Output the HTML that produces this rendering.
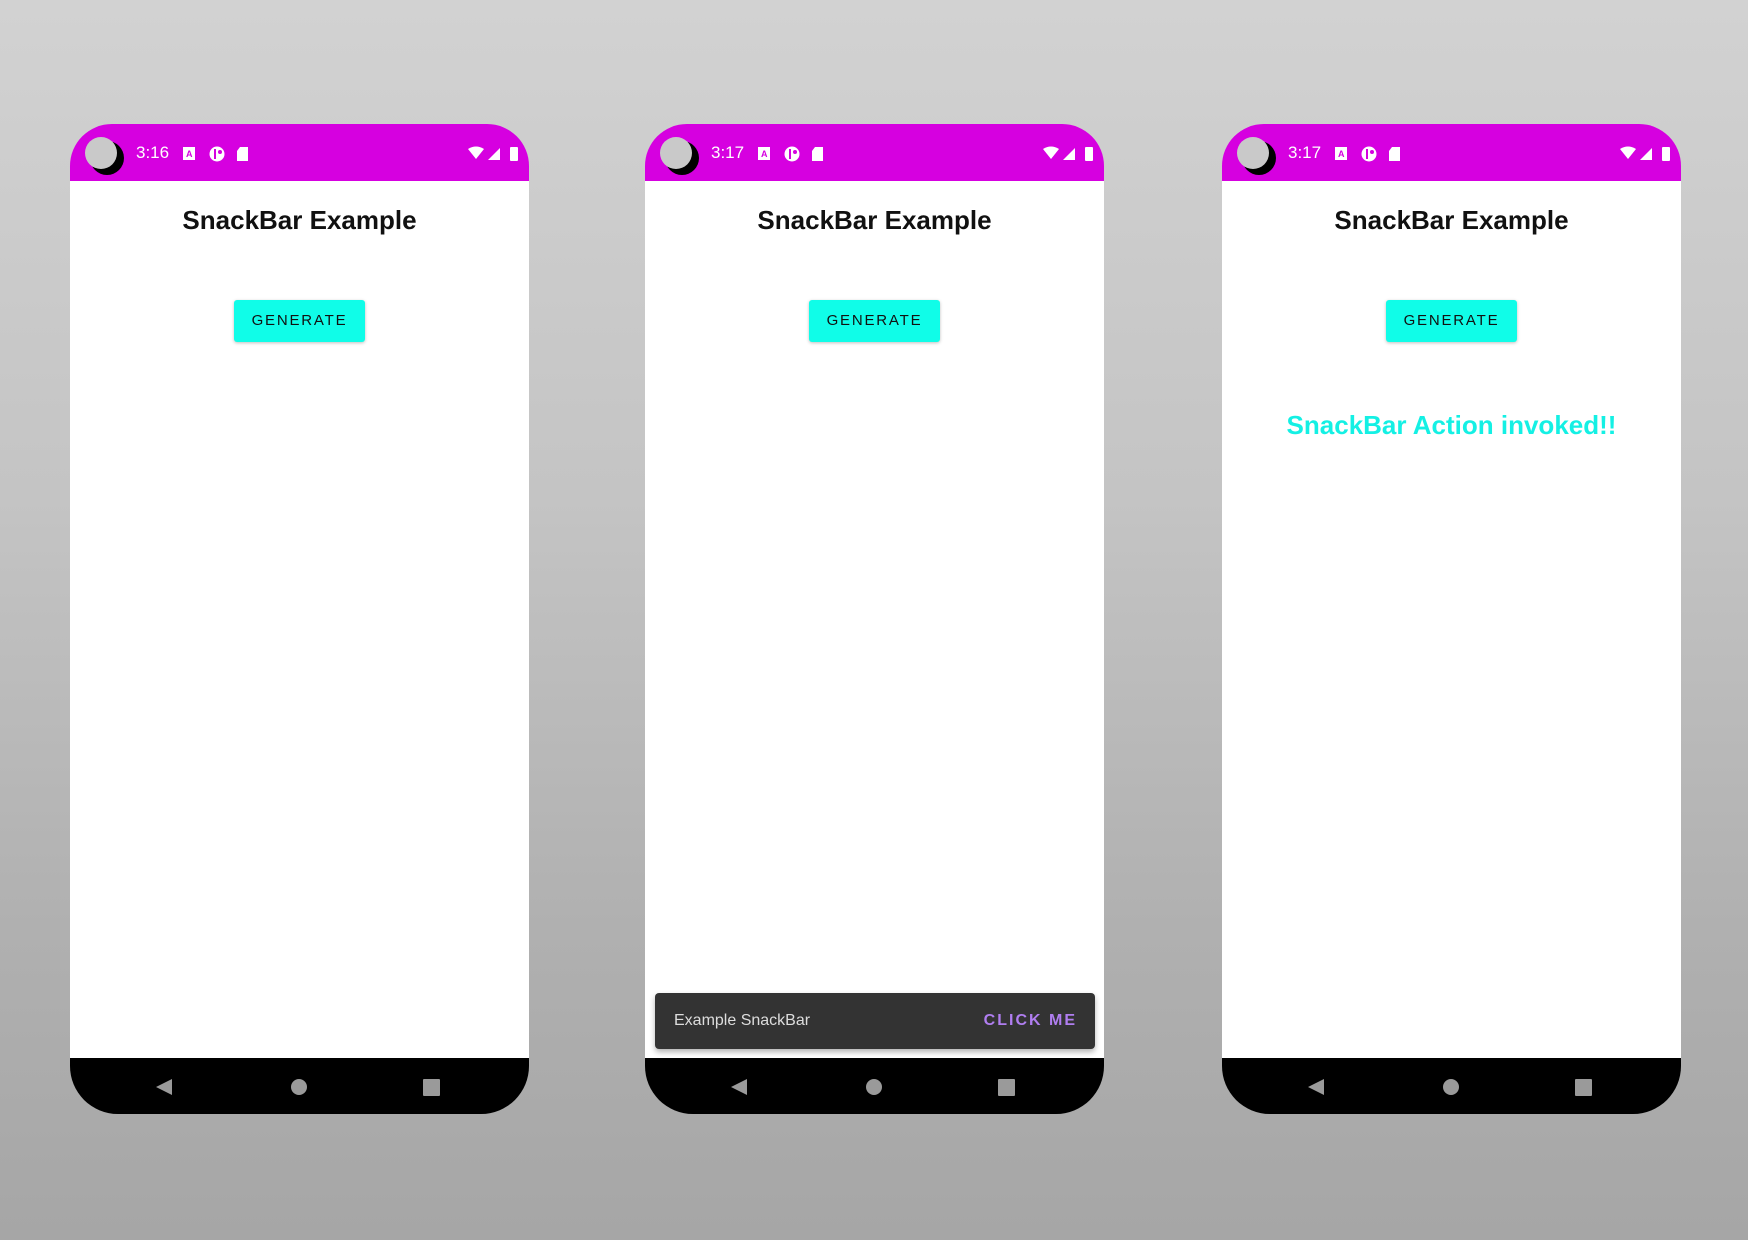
<!DOCTYPE html>
<html><head><style>
body{margin:0;width:1748px;height:1240px;overflow:hidden;background:linear-gradient(180deg,#d2d2d2 0%,#c4c4c4 40%,#b0b0b0 75%,#a6a6a6 100%);font-family:"Liberation Sans",sans-serif;position:relative}
.ph{position:absolute;top:124px;width:459px;height:990px;}
.sb{position:absolute;left:0;top:0;width:459px;height:57px;background:#d600e0;border-radius:42px 42px 0 0}
.scr{position:absolute;left:0;top:57px;width:459px;height:877px;background:#fff}
.nav{position:absolute;left:0;top:934px;width:459px;height:56px;background:#000;border-radius:0 0 48px 48px}
.cam1{position:absolute;left:20px;top:17px;width:34px;height:34px;border-radius:50%;background:#000}
.cam2{position:absolute;left:15px;top:13px;width:32px;height:32px;border-radius:50%;background:#c9c9c9}
.time{position:absolute;left:66px;top:19px;color:#fff;font-size:17px}
.ttl{position:absolute;left:0;width:459px;top:24px;text-align:center;font-size:26px;font-weight:bold;color:#111}
.btn{position:absolute;left:164px;top:119px;width:131px;height:42px;background:#10fde8;border-radius:3px;box-shadow:0 1px 3px rgba(0,0,0,.25);text-align:center;line-height:42px;font-size:15px;letter-spacing:1.8px;color:#111}
.ic{position:absolute;top:22px}
</style></head><body>
<div class="ph" style="left:70px">
<div class="sb"><div class="cam1"></div><div class="cam2"></div><div class="time">3:16</div>
<svg class="ic" style="left:113px" width="120" height="16"><rect x="0" y="1" width="12" height="13" fill="#fff"/><text x="3" y="11" font-size="9" fill="#d600e0" font-weight="bold">A</text><circle cx="34" cy="8" r="7.5" fill="#fff"/><rect x="31" y="3" width="2" height="10" fill="#d600e0"/><circle cx="37" cy="6" r="2" fill="#d600e0"/><path d="M57 1h8v14h-11v-10z" fill="#fff"/></svg>
<svg class="ic" style="left:398px" width="56" height="16"><path d="M0 3 Q8 -2 16 3 L8 13z" fill="#fff"/><path d="M20 14 L32 2 V14z" fill="#fff"/><rect x="42" y="1" width="8" height="14" rx="1" fill="#fff"/></svg></div>
<div class="scr"><div class="ttl">SnackBar Example</div><div class="btn">GENERATE</div></div>
<div class="nav"><svg width="459" height="56"><path d="M86 29 L102 21 V37z" fill="#9a9a9a"/><circle cx="229" cy="29" r="8" fill="#9a9a9a"/><rect x="353" y="21" width="17" height="17" rx="1" fill="#9a9a9a"/></svg></div>
</div>

<div class="ph" style="left:645px">
<div class="sb"><div class="cam1"></div><div class="cam2"></div><div class="time">3:17</div>
<svg class="ic" style="left:113px" width="120" height="16"><rect x="0" y="1" width="12" height="13" fill="#fff"/><text x="3" y="11" font-size="9" fill="#d600e0" font-weight="bold">A</text><circle cx="34" cy="8" r="7.5" fill="#fff"/><rect x="31" y="3" width="2" height="10" fill="#d600e0"/><circle cx="37" cy="6" r="2" fill="#d600e0"/><path d="M57 1h8v14h-11v-10z" fill="#fff"/></svg>
<svg class="ic" style="left:398px" width="56" height="16"><path d="M0 3 Q8 -2 16 3 L8 13z" fill="#fff"/><path d="M20 14 L32 2 V14z" fill="#fff"/><rect x="42" y="1" width="8" height="14" rx="1" fill="#fff"/></svg></div>
<div class="scr"><div class="ttl">SnackBar Example</div><div class="btn">GENERATE</div>
<div style="position:absolute;left:10px;top:812px;width:440px;height:56px;background:#333;border-radius:4px;box-shadow:0 3px 6px rgba(0,0,0,.3)"><span style="position:absolute;left:19px;top:19px;color:#ddd;font-size:16px">Example SnackBar</span><span style="position:absolute;right:18px;top:19px;color:#b07ef0;font-size:16px;font-weight:bold;letter-spacing:2px">CLICK ME</span></div></div>
<div class="nav"><svg width="459" height="56"><path d="M86 29 L102 21 V37z" fill="#9a9a9a"/><circle cx="229" cy="29" r="8" fill="#9a9a9a"/><rect x="353" y="21" width="17" height="17" rx="1" fill="#9a9a9a"/></svg></div>
</div>

<div class="ph" style="left:1222px">
<div class="sb"><div class="cam1"></div><div class="cam2"></div><div class="time">3:17</div>
<svg class="ic" style="left:113px" width="120" height="16"><rect x="0" y="1" width="12" height="13" fill="#fff"/><text x="3" y="11" font-size="9" fill="#d600e0" font-weight="bold">A</text><circle cx="34" cy="8" r="7.5" fill="#fff"/><rect x="31" y="3" width="2" height="10" fill="#d600e0"/><circle cx="37" cy="6" r="2" fill="#d600e0"/><path d="M57 1h8v14h-11v-10z" fill="#fff"/></svg>
<svg class="ic" style="left:398px" width="56" height="16"><path d="M0 3 Q8 -2 16 3 L8 13z" fill="#fff"/><path d="M20 14 L32 2 V14z" fill="#fff"/><rect x="42" y="1" width="8" height="14" rx="1" fill="#fff"/></svg></div>
<div class="scr"><div class="ttl">SnackBar Example</div><div class="btn">GENERATE</div>
<div style="position:absolute;left:0;width:459px;top:229px;text-align:center;font-size:26px;font-weight:bold;color:#14f0e4">SnackBar Action invoked!!</div></div>
<div class="nav"><svg width="459" height="56"><path d="M86 29 L102 21 V37z" fill="#9a9a9a"/><circle cx="229" cy="29" r="8" fill="#9a9a9a"/><rect x="353" y="21" width="17" height="17" rx="1" fill="#9a9a9a"/></svg></div>
</div>
</body></html>
